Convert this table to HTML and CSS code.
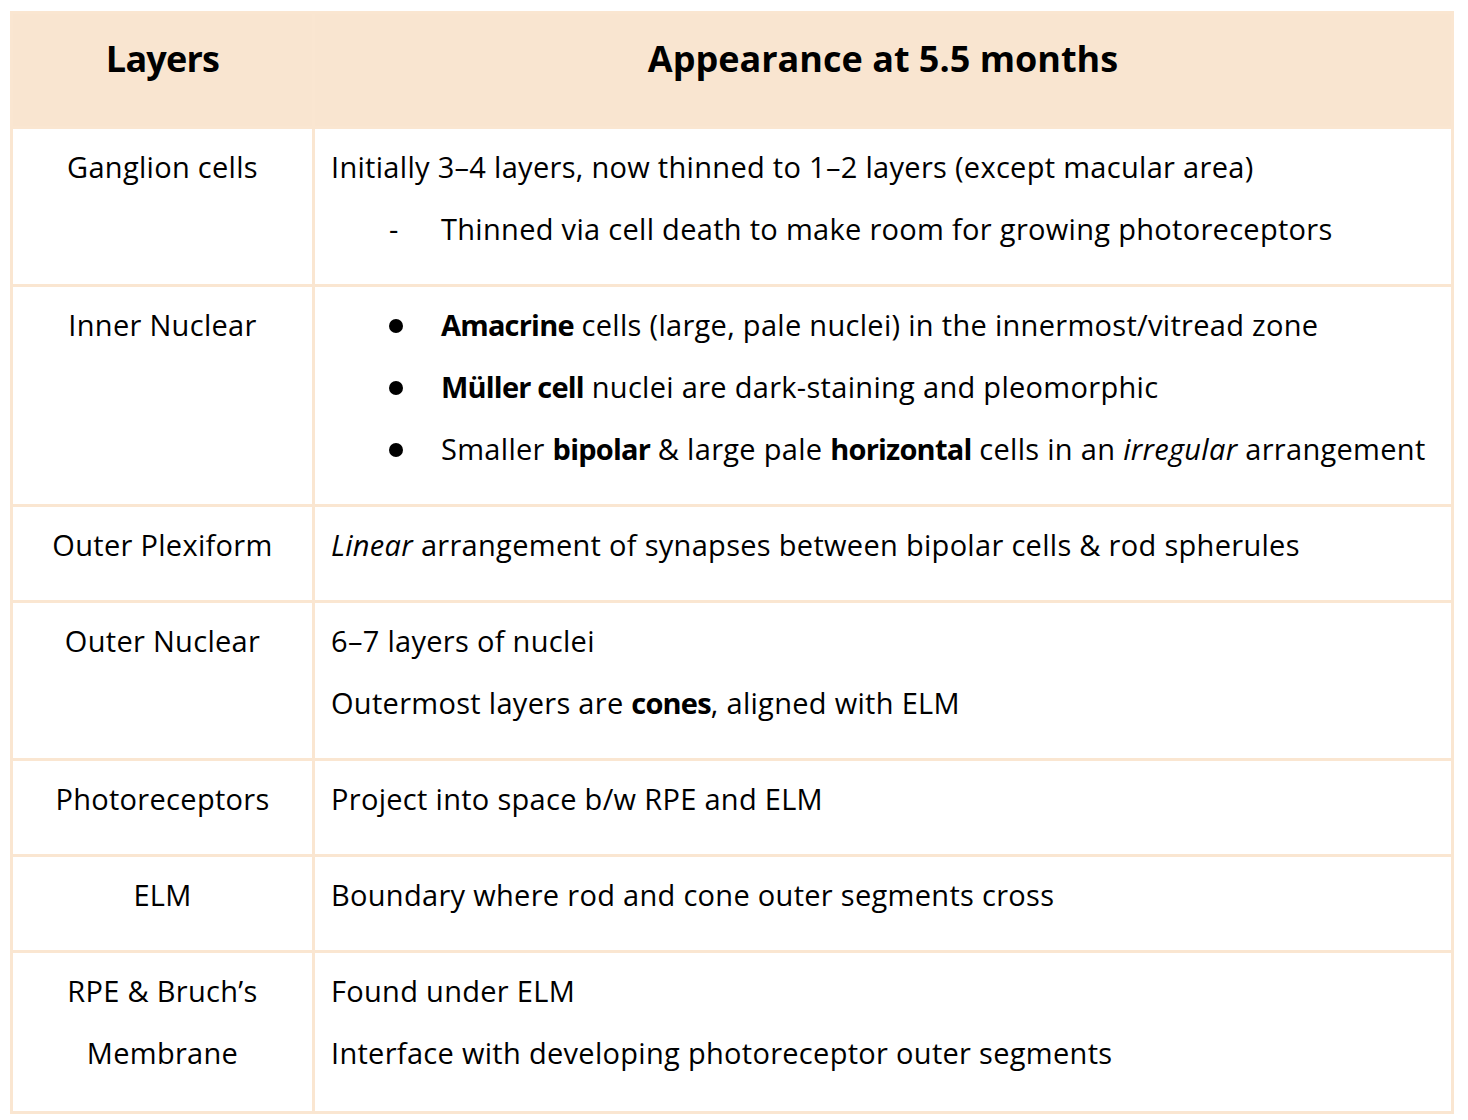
FILE: index.html
```html
<!DOCTYPE html>
<html>
<head>
<meta charset="utf-8">
<link rel="stylesheet" href="styles.css">
</head>
<body>
<table class="layers">
  <colgroup><col class="c1"><col class="c2"></colgroup>
  <thead>
    <tr><th>Layers</th><th>Appearance at 5.5 months</th></tr>
  </thead>
  <tbody>
    <tr>
      <td class="name">Ganglion cells</td>
      <td class="desc">
        <p>Initially 3–4 layers, now thinned to 1–2 layers (except macular area)</p>
        <p class="item"><span class="mk dash">-</span><span>Thinned via cell death to make room for growing photoreceptors</span></p>
      </td>
    </tr>
    <tr>
      <td class="name">Inner Nuclear</td>
      <td class="desc">
        <p class="item"><span class="mk"><span class="dot"></span></span><span><b>Amacrine</b> cells (large, pale nuclei) in the innermost/vitread zone</span></p>
        <p class="item"><span class="mk"><span class="dot"></span></span><span><b>Müller cell</b> nuclei are dark-staining and pleomorphic</span></p>
        <p class="item"><span class="mk"><span class="dot"></span></span><span>Smaller <b>bipolar</b> &amp; large pale <b>horizontal</b> cells in an <i>irregular</i> arrangement</span></p>
      </td>
    </tr>
    <tr>
      <td class="name">Outer Plexiform</td>
      <td class="desc"><p><i>Linear</i> arrangement of synapses between bipolar cells &amp; rod spherules</p></td>
    </tr>
    <tr>
      <td class="name">Outer Nuclear</td>
      <td class="desc">
        <p>6–7 layers of nuclei</p>
        <p>Outermost layers are <b>cones</b>, aligned with ELM</p>
      </td>
    </tr>
    <tr>
      <td class="name">Photoreceptors</td>
      <td class="desc"><p>Project into space b/w RPE and ELM</p></td>
    </tr>
    <tr>
      <td class="name">ELM</td>
      <td class="desc"><p>Boundary where rod and cone outer segments cross</p></td>
    </tr>
    <tr class="last">
      <td class="name">RPE &amp; Bruch’s<br>Membrane</td>
      <td class="desc">
        <p>Found under ELM</p>
        <p>Interface with developing photoreceptor outer segments</p>
      </td>
    </tr>
  </tbody>
</table>
</body>
</html>
```
FILE: styles.css
```css
html, body {
  margin: 0;
  padding: 0;
  background: #ffffff;
}
body {
  padding: 11px 0 0 10px;
  font-family: "Open Sans", "Lato", sans-serif;
  color: #000;
}
.layers {
  border-collapse: collapse;
  width: 1444px;
  table-layout: fixed;
}
.c1 { width: 302px; }
.layers th, .layers td {
  border: 3px solid #fae6d1;
  vertical-align: top;
}
.layers th {
  background: #f9e5d0;
  font-size: 36px;
  line-height: 44px;
  font-weight: 700;
  text-align: center;
  vertical-align: top;
  padding: 23px 0 45px;
}
.layers th:first-child {
  letter-spacing: -0.8px;
}
.layers td {
  padding: 7px 16px 24px;
  font-size: 29px;
  line-height: 62px;
  letter-spacing: 0.3px;
}
.layers .last td {
  padding-bottom: 27px;
}
.layers td b {
  letter-spacing: -0.8px;
}
.layers td.name {
  text-align: center;
  padding-left: 4px;
  padding-right: 4px;
}
.desc p {
  margin: 0;
  white-space: nowrap;
}
.item {
  display: flex;
  padding-left: 54px;
}
.mk {
  width: 56px;
  flex: none;
  display: flex;
  align-items: center;
}
.dot {
  display: block;
  width: 14px;
  height: 14px;
  border-radius: 50%;
  background: #000;
  margin-left: 4px;
  margin-top: 2px;
}
.mk.dash {
  display: block;
  padding-left: 4px;
  box-sizing: border-box;
}
```
